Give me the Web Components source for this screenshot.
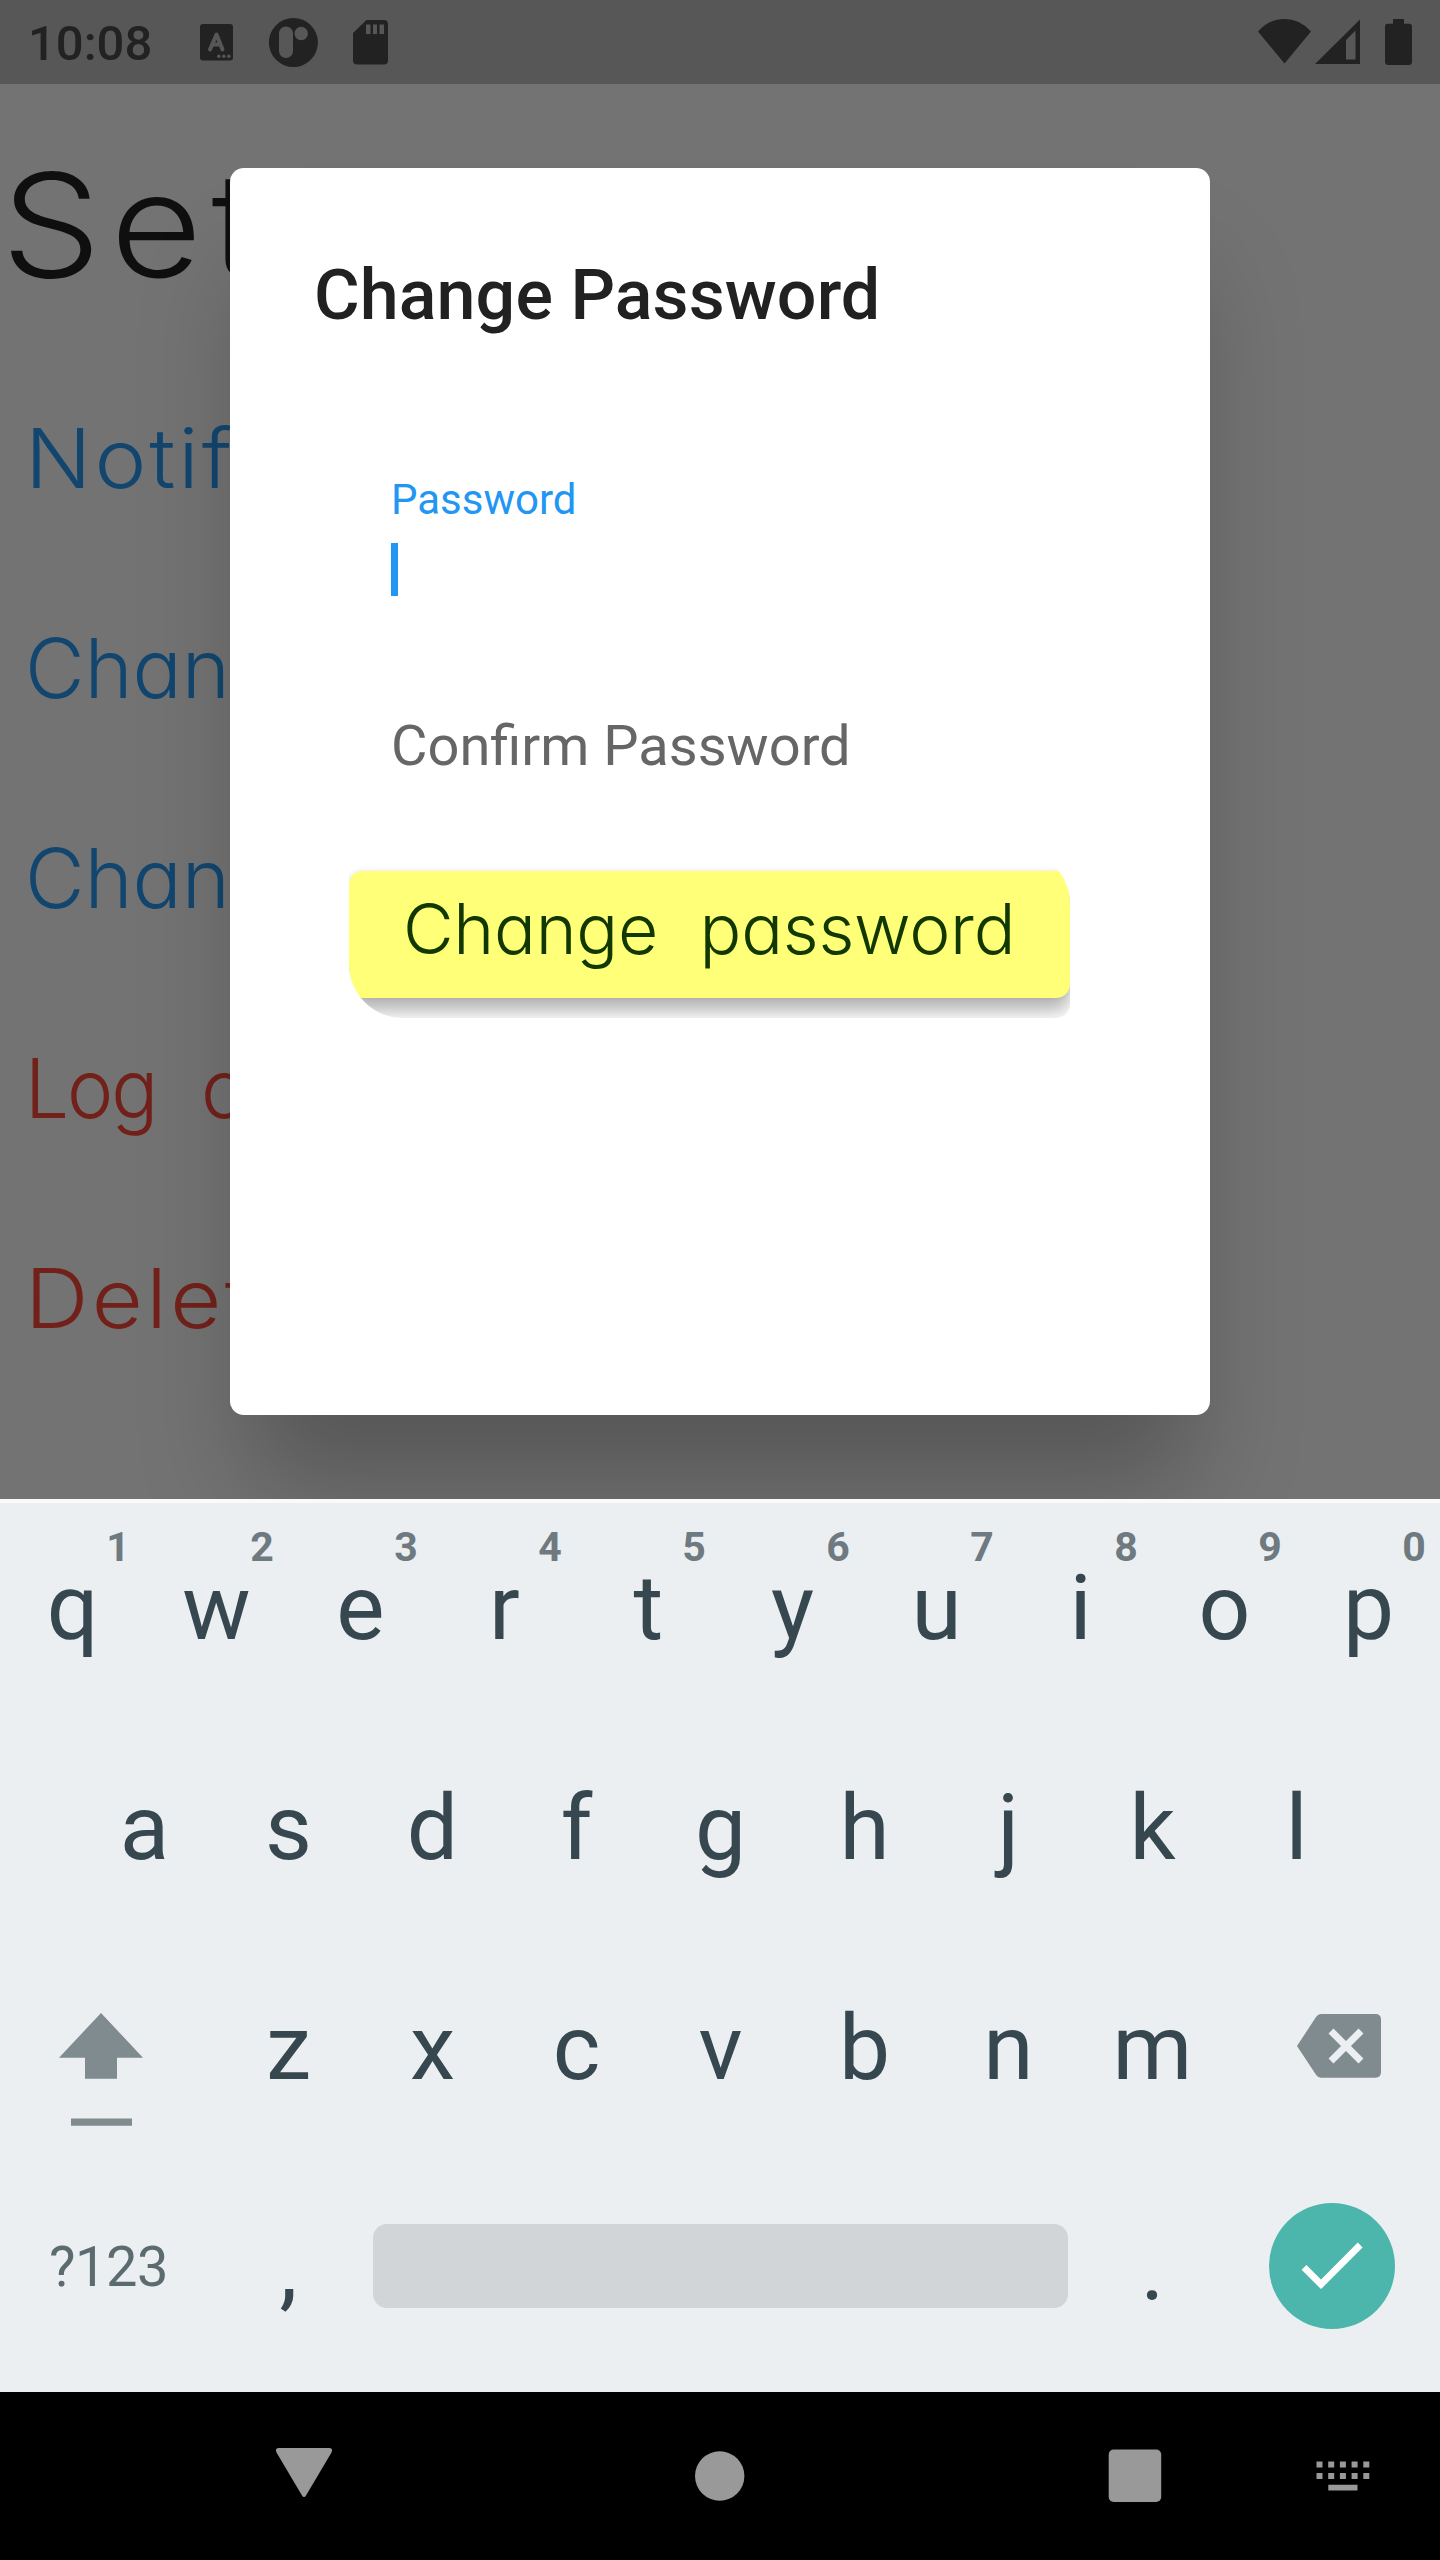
<!DOCTYPE html>
<html lang="en">
<head>
<meta charset="utf-8">
<title>Change Password</title>
<style>
  html, body { margin: 0; padding: 0; }
  body { width: 1440px; height: 2560px; overflow: hidden; font-family: Roboto, sans-serif; }
</style>
</head>
<body>
<phone-screen></phone-screen>
<script>
const define = (name, html, setup) => {
  const tpl = document.createElement('template');
  tpl.innerHTML = html;
  customElements.define(name, class extends HTMLElement {
    constructor() {
      super();
      this.attachShadow({ mode: 'open' }).appendChild(tpl.content.cloneNode(true));
    }
    connectedCallback() { if (setup) setup(this, this.shadowRoot); }
  });
};

/* Handwritten label: the letters are widened so the run takes the given width */
define('hand-text', `
<style>
  :host { display: block; font-family: Inter, Lato, sans-serif; font-weight: 300; font-feature-settings: "cv11"; line-height: 1; }
  span { display: inline-block; white-space: pre; transform-origin: 0 50%; vertical-align: top; word-spacing: .32em; }
</style><span><slot></slot></span>`, (el, root) => {
  const span = root.querySelector('span');
  const want = parseFloat(el.getAttribute('fit'));
  const n = el.textContent.length;
  const w = span.offsetWidth;
  /* half of the difference goes into spacing, the rest into letter width */
  span.style.letterSpacing = (want - w) * 0.5 / n + 'px';
  span.style.transform = 'scaleX(' + want / (w + (want - w) * 0.5) + ')';
});

define('status-bar', `
<style>
  :host { display: flex; height: 84px; box-sizing: border-box; background: #575757; color: #222; }
  time { font: 500 49px/84px Roboto, sans-serif; padding: 1.5px 0 0 28px; width: 200px; flex: none; box-sizing: border-box; white-space: nowrap; }
  svg { display: block; fill: currentColor; flex: none; }
  .gap { flex: 1; }
</style>
<time>10:08</time>
<svg width="200" height="84" viewBox="200 0 200 84">
  <rect x="200" y="24" width="33" height="36.5" rx="3"/>
  <path d="M210 49.500L216.500 34.500L222.500 49.500M212.500 44.500H220.500" fill="none" stroke="#575757" stroke-width="4" stroke-linecap="round" stroke-linejoin="round"/>
  <g fill="#575757"><circle cx="218.800" cy="56.300" r="1.700"/><circle cx="223.800" cy="56.300" r="1.700"/><circle cx="228.800" cy="56.300" r="1.700"/></g>
  <circle cx="293.400" cy="42.500" r="24.500"/>
  <rect x="279" y="26.500" width="14" height="31.500" rx="7" fill="#575757"/><circle cx="301.200" cy="33.500" r="6.700" fill="#575757"/>
  <path d="M366.500 20H384Q388 20 388 24V60.500Q388 64.500 384 64.500H357Q353 64.500 353 60.500V33Z"/>
  <path d="M366 24.500h4.500v9.500h-4.500zM373 24.500h4v9.500h-4zM379.500 24.500h4.500v9.500h-4.500z" fill="#575757"/>
</svg>
<div class="gap"></div>
<svg width="190" height="84" viewBox="1250 0 190 84">
  <path d="M1258 31.500Q1269 19 1284.500 19T1311 31.500L1284.500 63.500Z"/>
  <path fill-rule="evenodd" d="M1315 64L1360 19.500V64ZM1346 40V59.500H1355.500V30.500Z"/>
  <path d="M1393 19H1404V23.700H1409Q1412 23.700 1412 27V61.500Q1412 65 1409 65H1388Q1385 65 1385 61.500V27Q1385 23.700 1388 23.700H1393Z"/>
</svg>`);

define('settings-page', `
<style>
  :host { display: flex; flex-direction: column; height: 1415px; background: #737373; overflow: hidden; box-sizing: border-box; padding-top: 76px; }
  h1 { margin: 0; height: 130px; font-weight: normal; font-size: 144px; line-height: 130px; color: #0f0f0f; padding-left: 0; }
  nav { display: flex; flex-direction: column; padding: 64px 0 0 25px; }
  nav hand-text { height: 210px; line-height: 210px; font-size: 82px; color: #12466f; }
  nav hand-text.danger { color: #72211a; }
  h1 hand-text { line-height: 130px; padding-left: 1px; }
</style>
<h1><hand-text fit="266">Set</hand-text></h1>
<nav>
  <hand-text fit="210">Notif</hand-text>
  <hand-text fit="254">Chang</hand-text>
  <hand-text fit="254">Chang</hand-text>
  <hand-text class="danger" fit="220">Log o</hand-text>
  <hand-text class="danger" fit="230">Delet</hand-text>
</nav>`);

define('text-field', `
<style>
  :host { display: flex; flex-direction: column; font-family: Roboto, sans-serif; white-space: nowrap; }
  label { font-size: 56px; line-height: 66px; color: #666; }
  i { display: none; width: 7px; height: 53px; background: #2196f3; margin-top: 18px; }
  :host([focused]) label { font-size: 42px; line-height: 50px; color: #2196f3; }
  :host([focused]) i { display: block; }
</style><label><slot></slot></label><i></i>`);

define('sticky-button', `
<style>
  :host { display: block; width: 721px; height: 168px; box-sizing: border-box; padding-top: 21px; overflow: hidden; border-radius: 14px 54px 14px 54px; }
  button { all: unset; display: flex; align-items: center; width: 721px; height: 126.500px; box-sizing: border-box; padding: 0 0 10px 54px; border-radius: 14px; background: #ffff78; box-shadow: 0 13px 18px rgba(0,0,0,.3), 0 0 5px rgba(0,0,0,.08); color: #103800; font-size: 70px; }
</style><button><slot></slot></button>`);

define('modal-dialog', `
<style>
  :host { display: flex; flex-direction: column; box-sizing: border-box; width: 980px; height: 1247px; padding: 85.500px 84px 0; background: #fff; border-radius: 14px; box-shadow: 0 88px 100px -20px rgba(0,0,0,.25); }
  h2 { margin: 0; font: 500 70px/82px Roboto, sans-serif; letter-spacing: .08px; color: #212121; white-space: nowrap; }
  .form { display: flex; flex-direction: column; padding: 139.500px 0 0 77px; }
  .second { padding-top: 117px; }
  .action { margin: 71px 0 0 -42px; }
</style>
<h2>Change Password</h2>
<div class="form">
  <text-field focused>Password</text-field>
  <text-field class="second">Confirm Password</text-field>
  <sticky-button class="action"><hand-text fit="612">Change password</hand-text></sticky-button>
</div>`);

define('key-cap', `
<style>
  :host { display: block; position: relative; width: 144px; height: 220px; box-sizing: border-box; padding-left: 1px; flex: none; text-align: center; font: 400 91px/1 Roboto, sans-serif; color: #37474f; }
  .main { display: block; line-height: 106px; padding-top: 52px; }
  .alt { position: absolute; left: 106px; top: 20px; width: 24px; font: 700 41px/48px Roboto, sans-serif; color: #6e7a80; }
</style><span class="main"><slot></slot></span>`, (el, root) => {
  const alt = el.getAttribute('alt');
  if (alt) {
    const s = document.createElement('span');
    s.className = 'alt';
    s.textContent = alt;
    root.appendChild(s);
  }
});

define('soft-keyboard', `
<style>
  :host { display: flex; flex-direction: column; height: 893px; box-sizing: border-box; border-top: 4px solid #fafafa; background: #ebeff2; }
  .row { display: flex; height: 220px; justify-content: center; }
  svg { display: block; flex: none; }
  .sym { width: 216px; box-sizing: border-box; text-align: center; font: 400 56px/66px Roboto, sans-serif; letter-spacing: -.5px; color: #5c6b70; padding: 71px 0 0 1px; }
  .space { width: 695px; height: 84px; background: #d1d5d8; border-radius: 14px; margin: 61px 12px 0 13px; }
</style>
<div class="row" id="r1"></div>
<div class="row" id="r2"></div>
<div class="row" id="r3">
  <svg width="216" height="220" viewBox="0 1943 216 220" fill="#808b8f"><path d="M101 2013L143 2057.700H117V2078.700H85V2057.700H59Z"/><path d="M71 2118.600H132V2125.800H71Z"/></svg>
  <svg width="216" height="220" viewBox="1224 1943 216 220"><path fill="#808b8f" d="M1321 2014H1375.500Q1381 2014 1381 2019.500V2072Q1381 2077.700 1375.500 2077.700H1321Q1318 2077.700 1316 2074.700L1297 2046L1316 2017Q1318 2014 1321 2014Z"/><path d="M1331 2031L1361 2061M1361 2031L1331 2061" stroke="#ebeff2" stroke-width="7" fill="none"/></svg>
</div>
<div class="row">
  <div class="sym">?123</div>
  <key-cap>,</key-cap>
  <div class="space"></div>
  <key-cap>.</key-cap>
  <svg width="216" height="220" viewBox="1224 2163 216 220"><circle cx="1332" cy="2266" r="63" fill="#4db6ac"/><path d="M1304 2267.300L1321 2284.300L1360.200 2245" fill="none" stroke="#fff" stroke-width="6.800"/></svg>
</div>`, (el, root) => {
  const mk = (ch, alt) => {
    const k = document.createElement('key-cap');
    k.textContent = ch;
    if (alt) k.setAttribute('alt', alt);
    return k;
  };
  [...'qwertyuiop'].forEach((c, i) => root.getElementById('r1').append(mk(c, String((i + 1) % 10))));
  [...'asdfghjkl'].forEach(c => root.getElementById('r2').append(mk(c)));
  const r3 = root.getElementById('r3');
  [...'zxcvbnm'].forEach(c => r3.insertBefore(mk(c), r3.lastElementChild));
});

define('nav-bar', `
<style>
  :host { display: block; height: 168px; background: #000; }
  svg { display: block; }
</style>
<svg width="1440" height="168" viewBox="0 2392 1440 168" fill="#999">
  <path d="M279 2448H329Q333.500 2448 331.500 2452.500L306 2495.500Q304 2498.500 302 2495.500L276.500 2452.500Q274.500 2448 279 2448Z"/>
  <circle cx="719.700" cy="2476" r="24.700"/>
  <rect x="1108.700" y="2449.500" width="52.500" height="52.500" rx="5"/>
  <g id="k"></g>
</svg>`, (el, root) => {
  let d = '';
  for (const y of [2461.5, 2473]) for (let i = 0; i < 5; i++) d += `M${1316.5 + i * 11.7} ${y}h6v6h-6z`;
  d += 'M1328.300 2484.700h29.200v5.800h-29.200z';
  root.getElementById('k').innerHTML = `<path d="${d}"/>`;
});

define('phone-screen', `
<style>
  :host { display: flex; flex-direction: column; position: relative; width: 1440px; height: 2560px; overflow: hidden; }
  .page { height: 1415px; flex: none; overflow: hidden; position: relative; }
  modal-dialog { position: absolute; left: 230px; top: 84px; }
</style>
<status-bar></status-bar>
<div class="page"><settings-page></settings-page><modal-dialog></modal-dialog></div>
<soft-keyboard></soft-keyboard>
<nav-bar></nav-bar>`);
</script>
</body>
</html>
